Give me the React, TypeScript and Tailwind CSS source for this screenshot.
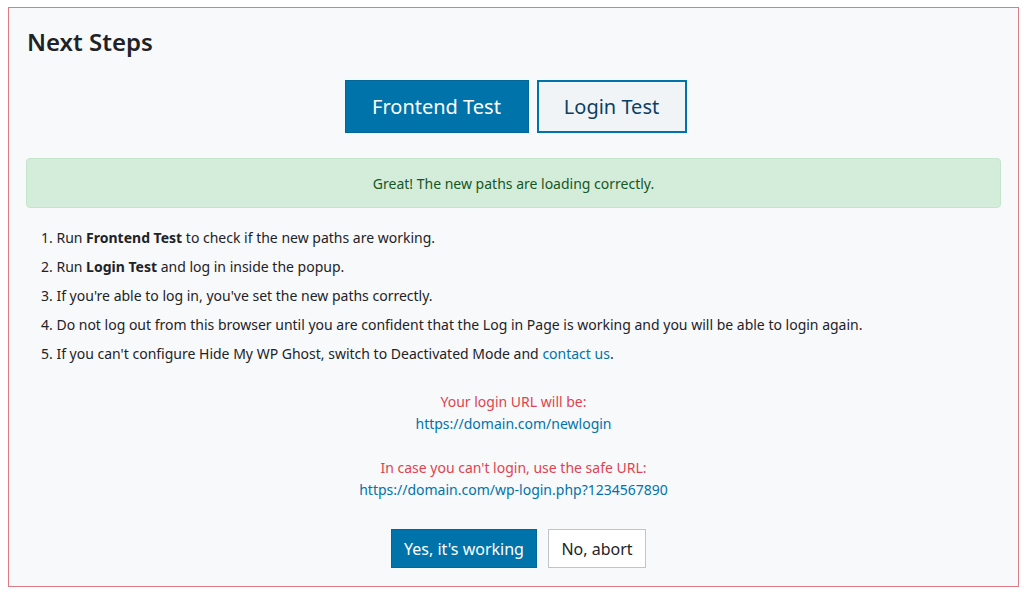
import React from 'react';

const steps: React.ReactNode[] = [
  <>Run <b>Frontend Test</b> to check if the new paths are working.</>,
  <>Run <b>Login Test</b> and log in inside the popup.</>,
  <>If you're able to log in, you've set the new paths correctly.</>,
  <>Do not log out from this browser until you are confident that the Log in Page is working and you will be able to login again.</>,
  <>
    If you can't configure Hide My WP Ghost, switch to Deactivated Mode and{' '}
    <a href="#" className="text-[#0073aa]">contact us</a>.
  </>,
];

export default function App() {
  return (
    <div className="w-full h-[594px] bg-white pt-[7px] pl-[8px] font-['Noto_Sans',sans-serif] text-[#1d2327]">
      <div className="w-[1011px] h-[580px] border border-[#e07a85] bg-[#f8f9fb] px-[17px]">
        {/* Heading */}
        <h2 className="pt-[18px] text-[24px] leading-[32px] font-semibold pl-[1px]">Next Steps</h2>

        {/* Test buttons */}
        <div className="flex justify-center gap-2 mt-[22px] pl-[4px]">
          <button className="w-[184px] h-[53px] bg-[#0073aa] border border-[#006799] text-white text-[20px]">
            Frontend Test
          </button>
          <button className="w-[150px] h-[53px] border-2 border-[#0073aa] bg-[#f1f4f7] text-[#0b3f63] text-[20px]">
            Login Test
          </button>
        </div>

        {/* Success alert */}
        <div className="mt-[25px] h-[50px] flex items-center justify-center rounded bg-[#d4edda] border border-[#c3e6cb] text-[#155724] text-[14px]">
          Great! The new paths are loading correctly.
        </div>

        {/* Steps */}
        <ol className="mt-[15px] pl-[15px] text-[14px] leading-[29px]">
          {steps.map((s, i) => (
            <li key={i}>
              {i + 1}. {s}
            </li>
          ))}
        </ol>

        {/* URLs */}
        <div className="mt-[23px] text-center text-[14px] leading-[22px]">
          <div className="text-[#e0434f]">Your login URL will be:</div>
          <a href="#" className="text-[#0073aa]">https://domain.com/newlogin</a>
          <div className="text-[#e0434f] mt-[22px]">In case you can't login, use the safe URL:</div>
          <a href="#" className="text-[#0073aa]">https://domain.com/wp-login.php?1234567890</a>
        </div>

        {/* Confirm buttons */}
        <div className="flex justify-center gap-[11px] mt-[28px] pl-[10px]">
          <button className="w-[146px] h-[39px] bg-[#0073aa] border border-[#006799] text-white text-[16px]">
            Yes, it's working
          </button>
          <button className="w-[98px] h-[39px] bg-white border border-[#c3c4c7] text-[#1d2327] text-[16px]">
            No, abort
          </button>
        </div>
      </div>
    </div>
  );
}
